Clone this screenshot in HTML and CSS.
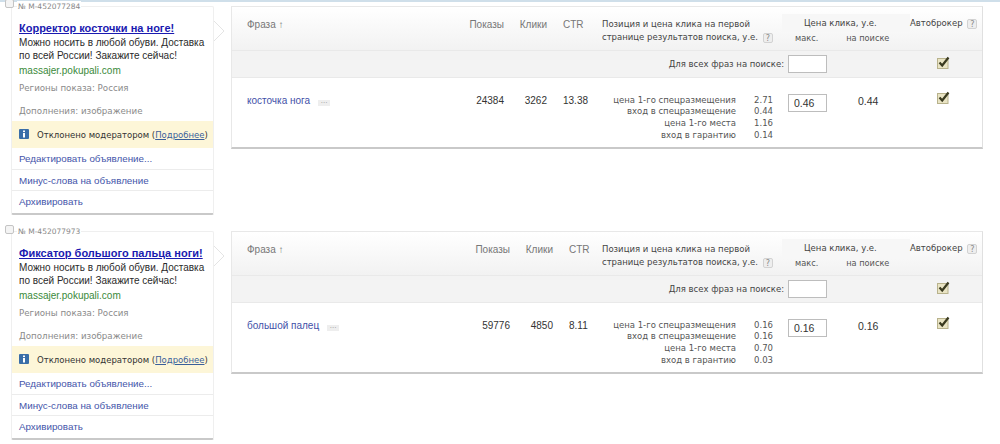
FILE: index.html
```html
<!DOCTYPE html>
<html lang="ru">
<head>
<meta charset="utf-8">
<title>Объявления</title>
<link rel="stylesheet" href="styles.css">
</head>
<body>
<div class="topbar"></div>

<section class="group">
  <label class="select select-first"><span class="box"></span></label>
  <span class="num">№ М-452077284</span>
  <article class="card">
    <svg class="arrow" width="11" height="22" viewBox="0 0 11 22"><path d="M0 1 L10 11 L0 21" fill="#fff" stroke="#e4e4e4"/></svg>
    <div class="ad">
      <a class="title" href="#">Корректор косточки на ноге!</a>
      <p class="body">Можно носить в любой обуви. Доставка<br>по всей России! Закажите сейчас!</p>
      <div class="url">massajer.pokupali.com</div>
      <div class="meta meta-regions">Регионы показа: Россия</div>
      <div class="meta meta-extra">Дополнения: изображение</div>
    </div>
    <div class="notice">
      <svg class="info" width="10" height="10" viewBox="0 0 10 10"><rect width="10" height="10" rx="1" fill="#3a6ea8"/><rect x="4" y="1.5" width="2" height="1.6" fill="#fff"/><rect x="4" y="4" width="2" height="4.5" fill="#fff"/></svg>
      <span>Отклонено модератором (<a href="#">Подробнее</a>)</span>
    </div>
    <a class="action" href="#">Редактировать объявление...</a>
    <a class="action" href="#">Минус-слова на объявление</a>
    <a class="action" href="#">Архивировать</a>
  </article>
  <div class="table">
    <div class="grid head">
      <div class="h-phrase">Фраза ↑</div>
      <div class="h-num">Показы</div>
      <div class="h-num">Клики</div>
      <div class="h-ctr">CTR</div>
      <div class="h-pos">Позиция и цена клика на первой<br>странице результатов поиска, у.е. <span class="help">?</span></div>
      <div class="h-price">
        <div class="h-price-top">Цена клика, у.е.</div>
        <div class="h-price-sub"><span>макс.</span><span>на поиске</span></div>
      </div>
      <div class="h-auto">Автоброкер <span class="help">?</span></div>
    </div>
    <div class="grid all">
      <div class="all-label">Для всех фраз на поиске:</div>
      <input class="bid" type="text" aria-label="Цена">
      <div class="all-check"><svg class="check" width="13" height="13" viewBox="0 0 13 13"><rect x="0.5" y="2.5" width="10.5" height="10" fill="#e9e4c4" stroke="#b8b28c"/><path d="M2.5 6.5 L5.2 9.5 L11.5 1.5" fill="none" stroke="#3a3a20" stroke-width="2.2"/></svg></div>
    </div>
    <div class="grid data">
      <div class="d-phrase"><a href="#">косточка нога</a><span class="more">...</span></div>
      <div class="d-num d-shows">24384</div>
      <div class="d-num">3262</div>
      <div class="d-ctr">13.38</div>
      <div class="d-pos">
        <span>цена 1-го спецразмещения</span><span>2.71</span>
        <span>вход в спецразмещение</span><span>0.44</span>
        <span>цена 1-го места</span><span>1.16</span>
        <span>вход в гарантию</span><span>0.14</span>
      </div>
      <div class="d-price"><input class="bid bid-val" type="text" value="0.46" aria-label="Цена"><span class="d-search">0.44</span></div>
      <div class="d-check"><svg class="check" width="13" height="13" viewBox="0 0 13 13"><rect x="0.5" y="2.5" width="10.5" height="10" fill="#e9e4c4" stroke="#b8b28c"/><path d="M2.5 6.5 L5.2 9.5 L11.5 1.5" fill="none" stroke="#3a3a20" stroke-width="2.2"/></svg></div>
    </div>
  </div>
</section>

<section class="group">
  <label class="select"><span class="box"></span></label>
  <span class="num">№ М-452077973</span>
  <article class="card">
    <svg class="arrow" width="11" height="22" viewBox="0 0 11 22"><path d="M0 1 L10 11 L0 21" fill="#fff" stroke="#e4e4e4"/></svg>
    <div class="ad">
      <a class="title" href="#">Фиксатор большого пальца ноги!</a>
      <p class="body">Можно носить в любой обуви. Доставка<br>по всей России! Закажите сейчас!</p>
      <div class="url">massajer.pokupali.com</div>
      <div class="meta meta-regions">Регионы показа: Россия</div>
      <div class="meta meta-extra">Дополнения: изображение</div>
    </div>
    <div class="notice">
      <svg class="info" width="10" height="10" viewBox="0 0 10 10"><rect width="10" height="10" rx="1" fill="#3a6ea8"/><rect x="4" y="1.5" width="2" height="1.6" fill="#fff"/><rect x="4" y="4" width="2" height="4.5" fill="#fff"/></svg>
      <span>Отклонено модератором (<a href="#">Подробнее</a>)</span>
    </div>
    <a class="action" href="#">Редактировать объявление...</a>
    <a class="action" href="#">Минус-слова на объявление</a>
    <a class="action" href="#">Архивировать</a>
  </article>
  <div class="table wide-phrase">
    <div class="grid head">
      <div class="h-phrase">Фраза ↑</div>
      <div class="h-num">Показы</div>
      <div class="h-num">Клики</div>
      <div class="h-ctr">CTR</div>
      <div class="h-pos">Позиция и цена клика на первой<br>странице результатов поиска, у.е. <span class="help">?</span></div>
      <div class="h-price">
        <div class="h-price-top">Цена клика, у.е.</div>
        <div class="h-price-sub"><span>макс.</span><span>на поиске</span></div>
      </div>
      <div class="h-auto">Автоброкер <span class="help">?</span></div>
    </div>
    <div class="grid all">
      <div class="all-label">Для всех фраз на поиске:</div>
      <input class="bid" type="text" aria-label="Цена">
      <div class="all-check"><svg class="check" width="13" height="13" viewBox="0 0 13 13"><rect x="0.5" y="2.5" width="10.5" height="10" fill="#e9e4c4" stroke="#b8b28c"/><path d="M2.5 6.5 L5.2 9.5 L11.5 1.5" fill="none" stroke="#3a3a20" stroke-width="2.2"/></svg></div>
    </div>
    <div class="grid data">
      <div class="d-phrase"><a href="#">большой палец</a><span class="more">...</span></div>
      <div class="d-num">59776</div>
      <div class="d-num">4850</div>
      <div class="d-ctr">8.11</div>
      <div class="d-pos">
        <span>цена 1-го спецразмещения</span><span>0.16</span>
        <span>вход в спецразмещение</span><span>0.16</span>
        <span>цена 1-го места</span><span>0.70</span>
        <span>вход в гарантию</span><span>0.03</span>
      </div>
      <div class="d-price"><input class="bid bid-val" type="text" value="0.16" aria-label="Цена"><span class="d-search">0.16</span></div>
      <div class="d-check"><svg class="check" width="13" height="13" viewBox="0 0 13 13"><rect x="0.5" y="2.5" width="10.5" height="10" fill="#e9e4c4" stroke="#b8b28c"/><path d="M2.5 6.5 L5.2 9.5 L11.5 1.5" fill="none" stroke="#3a3a20" stroke-width="2.2"/></svg></div>
    </div>
  </div>
</section>
</body>
</html>
```
FILE: styles.css
```css
* { box-sizing: border-box; }
html, body { margin: 0; padding: 0; background: #fff; overflow: hidden; }
body { font-family: "Liberation Sans", Arial, sans-serif; color: #333; height: 444px; position: relative; }
a { color: #3f51a8; text-decoration: none; }

.topbar { position: absolute; top: 0; left: 0; right: 0; height: 2px; background: #cfdfea; }

.group { position: relative; display: flex; align-items: flex-start; height: 225px; padding: 6px 17px 0 11px; gap: 17px; }

.select { position: absolute; left: 5px; top: 0; z-index: 3; }
.select-first { top: -1px; }
.box { display: block; width: 9px; height: 9px; border: 1px solid #c4c4c4; border-radius: 2px; background: #f4f4f4; }
.num { position: absolute; left: 17px; top: 1px; padding: 0 1px; background: #fff; font-size: 7.5px; line-height: 11px; color: #888; font-family: "DejaVu Sans", sans-serif; z-index: 2; }

.card { position: relative; flex: 0 0 203px; min-width: 0; height: 209px; background: #fff; border: 1px solid #efefef; border-bottom: 2px solid #c9c9c9; border-radius: 2px; }
.arrow { position: absolute; left: 202px; top: 13px; }

.ad { height: 114px; padding: 14px 0 0 7px; }
.title { display: block; font-size: 11px; line-height: 14px; font-weight: bold; color: #1a1ab0; text-decoration: underline; white-space: nowrap; }
.body { margin: 2px 0 0; font-size: 10px; line-height: 12.5px; color: #2b2b2b; white-space: nowrap; }
.url { margin-top: 2px; font-size: 10px; line-height: 13px; color: #3a8a3a; }
.meta { font-family: "DejaVu Sans", sans-serif; font-size: 8.7px; line-height: 11px; color: #8a8a8a; }
.meta-regions { margin-top: 6px; }
.meta-extra { margin-top: 12px; }

.notice { display: flex; align-items: center; gap: 8px; height: 27px; padding-left: 7px; background: #fdf6d8; font-family: "DejaVu Sans", sans-serif; font-size: 8.5px; color: #333; white-space: nowrap; }
.notice a { color: #3a5f9a; text-decoration: underline; }
.info { flex: none; margin-top: -2px; }

.action { display: flex; align-items: center; height: 21px; padding-left: 7px; border-top: 1px solid #ececec; font-size: 9.8px; color: #4455aa; }
.notice + .action { border-top: 0; height: 21px; }

.table { flex: 0 0 752px; height: 143px; border: 1px solid #e8e8e8; border-bottom: 2px solid #c9c9c9; border-right-color: #e0e0e0; background: #fff; }
.grid { display: grid; grid-template-columns: 229px 43px 43px 55px 186px 122px 1fr; }
.wide-phrase .grid { grid-template-columns: 235px 43px 43px 49px 186px 122px 1fr; }

.head { height: 44px; background: linear-gradient(#fff, #f2f2f2); font-size: 10px; color: #777; border-bottom: 1px solid #e9e9e9; }
.h-phrase { padding: 12px 0 0 15px; }
.h-num { padding-top: 12px; text-align: right; }
.h-ctr { padding: 12px 0 0 16px; }
.h-pos, .h-auto, .h-price { font-family: "DejaVu Sans", sans-serif; font-size: 8.5px; color: #444; }
.h-pos { padding-top: 11px; line-height: 12.5px; white-space: nowrap; }
.h-price { margin-left: -6px; }
.h-price-top { height: 18px; margin-top: 7px; padding-top: 4px; padding-left: 22px; background: #f7f7f7; line-height: 11px; }
.h-price-sub { display: flex; padding: 1px 0 0 13px; font-size: 8.2px; line-height: 11px; color: #555; }
.h-price-sub span + span { margin-left: 28px; }
.h-auto { padding: 11px 0 0 0; white-space: nowrap; }
.help { display: inline-block; margin-left: 2px; width: 10px; height: 10px; line-height: 9px; border: 1px solid #d2d2d2; border-radius: 2px; background: #eee; color: #888; font-size: 8px; text-align: center; vertical-align: -1px; }

.all { height: 27px; background: #f3f3f3; align-items: center; border-bottom: 1px solid #e9e9e9; }
.all-label { grid-column: 1 / 6; text-align: right; padding-right: 4px; font-family: "DejaVu Sans", sans-serif; font-size: 8.5px; color: #444; }
.bid { width: 39px; height: 18px; padding: 0 0 1px 5px; margin: 0; border: 1px solid #bdbdbd; background: #fff; font-family: "Liberation Sans", sans-serif; font-size: 10.5px; color: #333; outline: 0; border-radius: 0; }
.all-check { grid-column: 7; padding-left: 27px; line-height: 0; margin-top: -4px; }

.data { height: 70px; align-items: start; }
.d-phrase { padding: 16px 0 0 15px; font-size: 10px; line-height: 13px; white-space: nowrap; }
.d-phrase a { color: #3f51a8; }
.more { display: inline-block; margin-left: 8px; width: 12px; height: 6px; background: #eee; color: #999; font-size: 8px; line-height: 2px; text-align: center; vertical-align: 1px; }
.d-num { padding-top: 16px; text-align: right; font-size: 10px; line-height: 13px; color: #333; }
.d-ctr { padding: 16px 0 0 16px; font-size: 10px; line-height: 13px; color: #333; }
.d-pos { display: grid; grid-template-columns: 134px 37px; padding-top: 16.5px; font-family: "DejaVu Sans", sans-serif; font-size: 8.5px; line-height: 11.7px; color: #555; white-space: nowrap; }
.d-pos span { text-align: right; }
.d-price { display: flex; padding-top: 16px; }
.bid-val { flex: none; }
.d-search { margin: 1px 0 0 31px; font-size: 10.5px; line-height: 13px; color: #333; }
.d-check { padding: 13px 0 0 27px; line-height: 0; }
```
